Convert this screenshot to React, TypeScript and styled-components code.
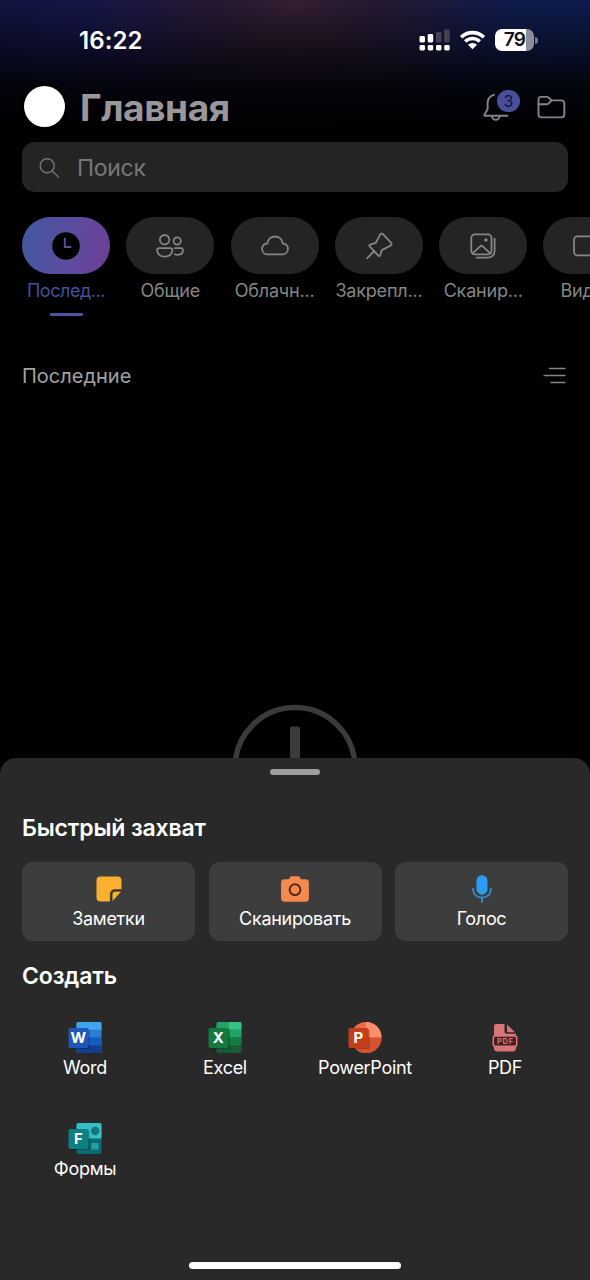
import React from "react";
import styled, { createGlobalStyle } from "styled-components";

const GlobalStyle = createGlobalStyle`
  * { box-sizing: border-box; }
  html, body { margin: 0; padding: 0; background: #000; }
  body { font-family: Inter, "Liberation Sans", sans-serif; overflow: hidden; }
  svg { display: block; flex: none; }
`;

const Screen = styled.div`
  width: 590px;
  height: 1280px;
  display: flex;
  flex-direction: column;
  overflow: hidden;
  background:
    linear-gradient(180deg, rgba(0, 0, 0, 0) 0, rgba(0, 0, 0, 0.4) 45px, rgba(0, 0, 0, 0.82) 85px, #000 130px),
    radial-gradient(ellipse 210px 150px at 50% 0, rgba(52, 30, 50, 0.95), rgba(44, 24, 36, 0.6) 40%, rgba(30, 20, 40, 0) 100%),
    linear-gradient(90deg, #101440 0, #17164a 22%, #201a42 50%, #121a4a 75%, #0c1c4c 100%);
`;

const StatusBar = styled.header`
  height: 80px;
  padding: 0 52px 0 79px;
  display: flex;
  align-items: center;
  justify-content: space-between;
`;

const Time = styled.span`
  color: #fff;
  font-size: 24px;
  font-weight: 600;
  line-height: 30px;
  letter-spacing: 0.1px;
  padding-top: 1px;
`;

const StatusIcons = styled.div`
  display: flex;
  align-items: center;
  gap: 9px;
`;

const Battery = styled.div`
  display: flex;
  align-items: center;
  gap: 1px;
`;

const BatteryBody = styled.div`
  width: 39px;
  height: 22px;
  border-radius: 7px;
  background: linear-gradient(90deg, #fff 31px, #8e8b9c 31px);
  color: #14121f;
  font-size: 19px;
  font-weight: 600;
  line-height: 22px;
  text-align: center;
  letter-spacing: -0.6px;
`;

const BatteryTip = styled.div`
  width: 3px;
  height: 7px;
  border-radius: 0 4px 4px 0;
  background: #77747f;
`;

const TitleBar = styled.div`
  height: 62px;
  padding: 0 23px 0 24px;
  display: flex;
  align-items: flex-start;
`;

const Avatar = styled.div`
  width: 41px;
  height: 41px;
  margin-top: 6px;
  border-radius: 50%;
  background: #fff;
  box-shadow: 0 -1px 0 3px #000;
`;

const Title = styled.h1`
  margin: 5px auto 0 15px;
  color: #99979b;
  font-size: 37px;
  font-weight: 700;
  line-height: 46px;
  letter-spacing: -0.4px;
`;

const BellButton = styled.div`
  position: relative;
  margin: 12px 24px 0 0;
`;

const Badge = styled.span`
  position: absolute;
  left: 14px;
  top: -2px;
  width: 23px;
  height: 22px;
  border-radius: 11px;
  background: #48509b;
  color: #10112a;
  font-size: 16px;
  line-height: 22px;
  text-align: center;
`;

const FolderButton = styled.div`
  margin: 14px 1px 0 0;
`;

const SearchField = styled.div`
  height: 50px;
  margin: 0 22px;
  padding: 1px 16px 0;
  display: flex;
  align-items: center;
  gap: 17px;
  border-radius: 13px;
  background: #242424;
  color: #777;
  font-size: 23px;
  line-height: 30px;
  letter-spacing: -0.3px;
`;

const Tabs = styled.nav`
  display: flex;
  gap: 16.3px;
  padding: 25px 0 0 22px;
  height: 125px;
`;

const Tab = styled.div`
  flex: none;
  width: 88px;
  display: flex;
  flex-direction: column;
  align-items: center;
`;

const Pill = styled.div<{ $active?: boolean }>`
  width: 88px;
  height: 57px;
  border-radius: 28.5px;
  display: flex;
  align-items: center;
  justify-content: center;
  background: ${(p) =>
    p.$active ? "linear-gradient(100deg, #4656a0 10%, #5c4b9f 55%, #6d4096 100%)" : "#242424"};
`;

const TabLabel = styled.span<{ $active?: boolean }>`
  margin-top: 5px;
  color: ${(p) => (p.$active ? "#46509c" : "#858585")};
  font-size: 18px;
  line-height: 24px;
  white-space: nowrap;
  letter-spacing: ${(p) => (p.$active ? -0.45 : -0.2)}px;
`;

const TabIndicator = styled.div`
  width: 33px;
  height: 3px;
  margin-top: 10px;
  border-radius: 1px;
  background: #4b549f;
`;

const ListHeader = styled.div`
  padding: 46px 24px 0 22px;
  display: flex;
  align-items: center;
  justify-content: space-between;
`;

const ListTitle = styled.h2`
  margin: 0;
  color: #a2a2a2;
  font-size: 20px;
  font-weight: 400;
  line-height: 26px;
`;

const EmptyState = styled.div`
  margin-top: auto;
  height: 54px;
  display: flex;
  justify-content: center;
  overflow: hidden;
`;

const Sheet = styled.section`
  height: 522px;
  flex: none;
  padding-top: 11px;
  display: flex;
  flex-direction: column;
  border-radius: 16px 16px 0 0;
  background: #292929;
`;

const Grabber = styled.div`
  align-self: center;
  width: 50px;
  height: 6px;
  border-radius: 3px;
  background: #9d9d9d;
`;

const SheetTitle = styled.h3<{ $top: number }>`
  margin: ${(p) => p.$top}px 22px 0;
  color: #fff;
  font-size: 23px;
  font-weight: 600;
  line-height: 30px;
  letter-spacing: -0.15px;
`;

const CaptureRow = styled.div`
  margin: 19px 22px 0;
  display: grid;
  grid-template-columns: repeat(3, 1fr);
  gap: 13.5px;
`;

const CaptureCard = styled.div`
  height: 79px;
  padding-top: 12px;
  display: flex;
  flex-direction: column;
  align-items: center;
  border-radius: 11px;
  background: #3d3d3d;
`;

const ItemLabel = styled.span<{ $top?: number }>`
  margin-top: ${(p) => p.$top ?? 2}px;
  color: #fff;
  font-size: 18px;
  line-height: 24px;
  letter-spacing: -0.3px;
`;

const CreateGrid = styled.div`
  margin: 31px 15px 0;
  display: grid;
  grid-template-columns: repeat(4, 1fr);
  grid-auto-rows: 101px;
`;

const CreateItem = styled.div`
  display: flex;
  flex-direction: column;
  align-items: center;
`;

const HomeIndicator = styled.div`
  width: 212px;
  height: 7px;
  margin: auto auto 11px;
  border-radius: 4px;
  background: #fff;
`;

const stroke = {
  fill: "none",
  stroke: "#858585",
  strokeWidth: 1.8,
  strokeLinecap: "round" as const,
  strokeLinejoin: "round" as const,
};

const Signal = () => (
  <svg width="31" height="22" viewBox="0 0 31 22">
    <g fill="#fff">
      <rect x="0.5" y="7" width="5.5" height="6.5" rx="1.4" />
      <rect x="8.7" y="5" width="5.5" height="8.5" rx="1.4" />
      <rect x="0.5" y="16" width="5.5" height="5.5" rx="1.4" />
      <rect x="8.7" y="16" width="5.5" height="5.5" rx="1.4" />
      <rect x="17" y="16" width="5.5" height="5.5" rx="1.4" />
      <rect x="25.2" y="16" width="5.5" height="5.5" rx="1.4" />
    </g>
    <g fill="#454154">
      <rect x="17" y="3" width="5.5" height="10.5" rx="1.4" />
      <rect x="25.2" y="0.5" width="5.5" height="13" rx="1.4" />
    </g>
  </svg>
);

const Wifi = () => (
  <svg width="27" height="20" viewBox="0 0 28 21">
    <g fill="none" stroke="#fff" strokeWidth="3.8">
      <path d="M2.1 7.6A17 17 0 0 1 25.9 7.6" />
      <path d="M6.4 12.1A10.8 10.8 0 0 1 21.6 12.1" />
    </g>
    <path d="M14 20.3 9.2 15.6a6.9 6.9 0 0 1 9.6 0z" fill="#fff" />
  </svg>
);

const Bell = () => (
  <svg width="30" height="32" viewBox="0 0 30 32">
    <g {...stroke} stroke="#858487" strokeWidth="1.9">
      <path d="M11 2.8C6.8 3.8 4.6 7 4.6 11.2v6L1.5 22.6c-.4.7-.1 1.200.6 1.200h22.200" />
      <path d="M9.200 24.200a3.600 3.600 0 0 0 7.200 0" />
    </g>
  </svg>
);

const Folder = () => (
  <svg width="29" height="26" viewBox="0 0 29 26">
    <g {...stroke} stroke="#858487" strokeWidth="1.9">
      <path d="M1.500 20.500v-15a2.600 2.600 0 0 1 2.600-2.600h5.600c.9 0 1.500.3 2.100.9l2.800 2.600h9.800a2.900 2.900 0 0 1 2.900 2.900v11.200a2.900 2.900 0 0 1-2.900 2.900H4.500a3 3 0 0 1-3-2.900z" />
      <path d="M1.500 10.300h8c1 0 1.600-.3 2.200-.9l2.900-3" />
    </g>
  </svg>
);

const Search = () => (
  <svg width="22" height="22" viewBox="0 0 22 22">
    <g {...stroke} stroke="#757575" strokeWidth="1.4">
      <circle cx="9.200" cy="8.800" r="7" />
      <path d="m14.300 13.900 6 6" />
    </g>
  </svg>
);

const Clock = () => (
  <svg width="28" height="28" viewBox="0 0 28 28">
    <circle cx="14" cy="14" r="13.800" fill="#000" />
    <path d="M12.800 5.800v9.200h6.600" fill="none" stroke="#604a9c" strokeWidth="1.900" />
  </svg>
);

const People = () => (
  <svg width="28" height="24" viewBox="0 0 28 24">
    <g {...stroke}>
      <circle cx="8.600" cy="5.700" r="4.700" />
      <circle cx="21.200" cy="7" r="3.600" />
      <path d="M3 14.200h11.400a1.900 1.900 0 0 1 1.900 1.900c0 4-3 6.600-7.600 6.600S1.100 20 1.100 16.100A1.900 1.900 0 0 1 3 14.200z" />
      <path d="M18.800 14.200h6.100a2 2 0 0 1 2 2c0 3-2.400 4.600-5.300 4.600-1.100 0-2.100-.2-3-.6" />
    </g>
  </svg>
);

const Cloud = () => (
  <svg width="28" height="22" viewBox="0 0 28 22">
    <path
      {...stroke}
      d="M6.300 8.500C6.800 4.300 9.900 1.500 14 1.500s7.200 2.800 7.700 7c3.100 0 5.200 2.400 5.200 5.400s-2.300 5.400-5.300 5.400H6.400c-3 0-5.300-2.400-5.300-5.400s2.100-5.400 5.200-5.400z"
    />
  </svg>
);

const Pin = () => (
  <svg width="28" height="28" viewBox="0 0 28 28">
    <path
      {...stroke}
      d="M2.200 26.200 9.300 19M4.600 14.300 13.300 23.700c.7.7 1.600.4 1.900-.5l1.600-5.100 8.700-4.500c1.300-.7 1.500-2 .5-3L18.200 2.400c-1.100-1.100-2.500-.9-3.200.5l-4.200 8-5.700 1.800c-1 .3-1.200 1-.5 1.600z"
    />
  </svg>
);

const Pictures = () => (
  <svg width="26" height="26" viewBox="0 0 26 26">
    <g {...stroke}>
      <rect x="1.300" y="1.400" width="20.200" height="20" rx="3.600" />
      <path d="m2.500 20.300 7.700-7c.8-.8 1.700-.8 2.500 0l7.700 7" />
      <path d="M24.600 5.600v12.600a6.300 6.300 0 0 1-6.300 6.400H6.600" />
    </g>
    <circle cx="15.900" cy="7" r="1.800" fill="#858585" />
  </svg>
);

const Video = () => (
  <svg width="28" height="24" viewBox="0 0 28 24">
    <rect {...stroke} x="1" y="2.300" width="20" height="19" rx="3.500" />
    <path {...stroke} d="m21 9 6-4v14l-6-4" />
  </svg>
);

const SortIcon = () => (
  <svg width="23" height="18" viewBox="0 0 23 18">
    <path d="M6 1.500h16.500M.5 8.500h22M7.500 15.500h15" stroke="#858585" strokeWidth="1.300" />
  </svg>
);

const AddCircle = () => (
  <svg width="126" height="126" viewBox="0 0 126 126">
    <circle cx="63" cy="63.500" r="60" fill="none" stroke="#3b3b3b" strokeWidth="5.500" />
    <path
      d="M60 22.500h6a2 2 0 0 1 2 2v34h34v10H68v34H58v-34H24v-10h34v-34a2 2 0 0 1 2-2z"
      fill="#3b3b3b"
    />
  </svg>
);

const NoteIcon = () => (
  <svg width="28" height="30" viewBox="0 0 28 30">
    <path
      d="M5.500 2.500h17a4 4 0 0 1 4 4v9.300h-6.700a4.300 4.300 0 0 0-4.300 4.300v7.400h-10a4 4 0 0 1-4-4v-17a4 4 0 0 1 4-4z"
      fill="#fcb02f"
    />
    <path d="M26 17.800 17.500 27v-6.700a2.500 2.500 0 0 1 2.500-2.500z" fill="#fcb02f" />
    <path d="M15.800 27.700v-7.600a3.900 3.900 0 0 1 3.900-3.900h7" fill="none" stroke="#4c360f" strokeWidth="1.700" />
  </svg>
);

const CameraIcon = () => (
  <svg width="30" height="30" viewBox="0 0 30 30">
    <path
      d="M9.500 4.200C10 2.900 10.700 2.200 12 2.200h6c1.300 0 2 .7 2.500 2l.4 1.100h4.600a3.400 3.400 0 0 1 3.400 3.400v15.600a3.400 3.400 0 0 1-3.400 3.400h-21a3.400 3.400 0 0 1-3.400-3.400V8.700a3.400 3.400 0 0 1 3.400-3.400h4.600z"
      fill="#f58a51"
    />
    <circle cx="15" cy="15.700" r="5.400" fill="none" stroke="#542a14" strokeWidth="2" />
  </svg>
);

const MicIcon = () => (
  <svg width="22" height="30" viewBox="0 0 22 30">
    <rect x="5.500" y="1.200" width="11" height="19.500" rx="5.500" fill="#2c9df5" />
    <path
      d="M2.200 14v1.700c0 4.600 3.700 8 8.800 8s8.800-3.400 8.800-8V14M11 23.700v5"
      fill="none"
      stroke="#3a91d6"
      strokeWidth="1.700"
    />
  </svg>
);

const IconLetter = styled.text`
  font-family: Inter, sans-serif;
  font-size: 15px;
  font-weight: 700;
  fill: #fff;
  text-anchor: middle;
`;

const PdfLetters = styled(IconLetter)`
  font-size: 7.5px;
  letter-spacing: 0.7px;
  fill: #d97578;
`;

const Plate = ({ color, letter }: { color: string; letter: string }) => (
  <>
    <rect x="1.500" y="6.800" width="20.300" height="20.300" rx="2.200" fill="#000" opacity="0.220" />
    <rect x="0.500" y="6" width="20" height="20" rx="2" fill={color} />
    <IconLetter x="10.300" y="21.300">{letter}</IconLetter>
  </>
);

const WordIcon = () => (
  <svg width="34" height="32" viewBox="0 0 34 32">
    <rect x="8.500" width="25" height="31" rx="1.800" fill="#2b7cd3" />
    <path d="M8.500 7.800V1.800A1.800 1.800 0 0 1 10.300 0h21.400a1.800 1.800 0 0 1 1.800 1.800v6z" fill="#41a5ee" />
    <path d="M8.500 15.500h25v8h-25z" fill="#185abd" />
    <path d="M8.500 23.200h25v6a1.800 1.800 0 0 1-1.800 1.800H10.300a1.800 1.800 0 0 1-1.800-1.800z" fill="#103f91" />
    <Plate color="#1d58b9" letter="W" />
  </svg>
);

const ExcelIcon = () => (
  <svg width="34" height="32" viewBox="0 0 34 32">
    <rect x="8.500" width="25" height="31" rx="1.800" fill="#185c37" />
    <path d="M8.500 1.800A1.800 1.800 0 0 1 10.300 0H21v15.500H8.500z" fill="#21a366" />
    <path d="M21 0h10.700a1.800 1.800 0 0 1 1.800 1.800v6H21z" fill="#33c481" />
    <path d="M21 7.800h12.500v7.700H21z" fill="#21a366" />
    <path d="M8.500 7.800H21v7.700H8.500zM21 15.500h12.500v7.700H21z" fill="#107c41" />
    <Plate color="#13793f" letter="X" />
  </svg>
);

const PowerPointIcon = () => (
  <svg width="34" height="32" viewBox="0 0 34 32">
    <circle cx="18" cy="15.500" r="15.500" fill="#ed6c47" />
    <path d="M18 0a15.500 15.500 0 0 1 15.500 15.500H18z" fill="#ff8f6b" />
    <path d="M2.500 15.500h31a15.500 15.500 0 0 1-31 0z" fill="#d35230" />
    <Plate color="#c43e1c" letter="P" />
  </svg>
);

const FormsIcon = () => (
  <svg width="34" height="32" viewBox="0 0 34 32">
    <rect x="8.500" width="25" height="31" rx="1.800" fill="#0b6b70" />
    <path d="M8.500 15.500V1.800A1.800 1.800 0 0 1 10.300 0h21.400a1.800 1.800 0 0 1 1.800 1.800v13.700z" fill="#37c0c4" />
    <circle cx="27.200" cy="8" r="4.200" fill="#13757a" />
    <rect x="23.500" y="20" width="7" height="6.500" fill="#26a0a4" />
    <Plate color="#0c7f83" letter="F" />
  </svg>
);

const PdfIcon = () => (
  <svg width="28" height="32" viewBox="0 0 28 32">
    <path
      d="M5 2h8.500v7.300a2.500 2.500 0 0 0 2.500 2.500h9V26a3.500 3.500 0 0 1-3.500 3.500h-15A3.500 3.500 0 0 1 3 26V4a2 2 0 0 1 2-2z"
      fill="#d97578"
    />
    <path d="M16 2.500 24 10.200h-6.700A1.300 1.300 0 0 1 16 8.900z" fill="#d97578" />
    <rect x="2.300" y="14" width="23.400" height="10.200" rx="1.800" fill="#421f21" stroke="#d97578" strokeWidth="1.600" />
    <PdfLetters x="14.400" y="21.900">PDF</PdfLetters>
  </svg>
);

const tabs = [
  { label: "Послед...", icon: <Clock />, active: true },
  { label: "Общие", icon: <People /> },
  { label: "Облачн...", icon: <Cloud /> },
  { label: "Закрепл...", icon: <Pin /> },
  { label: "Сканир...", icon: <Pictures /> },
  { label: "Видео", icon: <Video /> },
];

const captures = [
  { label: "Заметки", icon: <NoteIcon /> },
  { label: "Сканировать", icon: <CameraIcon /> },
  { label: "Голос", icon: <MicIcon /> },
];

const documents = [
  { label: "Word", icon: <WordIcon /> },
  { label: "Excel", icon: <ExcelIcon /> },
  { label: "PowerPoint", icon: <PowerPointIcon /> },
  { label: "PDF", icon: <PdfIcon /> },
  { label: "Формы", icon: <FormsIcon /> },
];

export default function App() {
  return (
    <>
      <GlobalStyle />
      <Screen>
        <StatusBar>
          <Time>16:22</Time>
          <StatusIcons>
            <Signal />
            <Wifi />
            <Battery>
              <BatteryBody>79</BatteryBody>
              <BatteryTip />
            </Battery>
          </StatusIcons>
        </StatusBar>
        <TitleBar>
          <Avatar />
          <Title>Главная</Title>
          <BellButton>
            <Bell />
            <Badge>3</Badge>
          </BellButton>
          <FolderButton>
            <Folder />
          </FolderButton>
        </TitleBar>
        <SearchField>
          <Search />
          <span>Поиск</span>
        </SearchField>
        <Tabs>
          {tabs.map((t) => (
            <Tab key={t.label}>
              <Pill $active={t.active}>{t.icon}</Pill>
              <TabLabel $active={t.active}>{t.label}</TabLabel>
              {t.active && <TabIndicator />}
            </Tab>
          ))}
        </Tabs>
        <ListHeader>
          <ListTitle>Последние</ListTitle>
          <SortIcon />
        </ListHeader>
        <EmptyState>
          <AddCircle />
        </EmptyState>
        <Sheet>
          <Grabber />
          <SheetTitle $top={38}>Быстрый захват</SheetTitle>
          <CaptureRow>
            {captures.map((c) => (
              <CaptureCard key={c.label}>
                {c.icon}
                <ItemLabel $top={3}>{c.label}</ItemLabel>
              </CaptureCard>
            ))}
          </CaptureRow>
          <SheetTitle $top={20}>Создать</SheetTitle>
          <CreateGrid>
            {documents.map((d) => (
              <CreateItem key={d.label}>
                {d.icon}
                <ItemLabel>{d.label}</ItemLabel>
              </CreateItem>
            ))}
          </CreateGrid>
          <HomeIndicator />
        </Sheet>
      </Screen>
    </>
  );
}
